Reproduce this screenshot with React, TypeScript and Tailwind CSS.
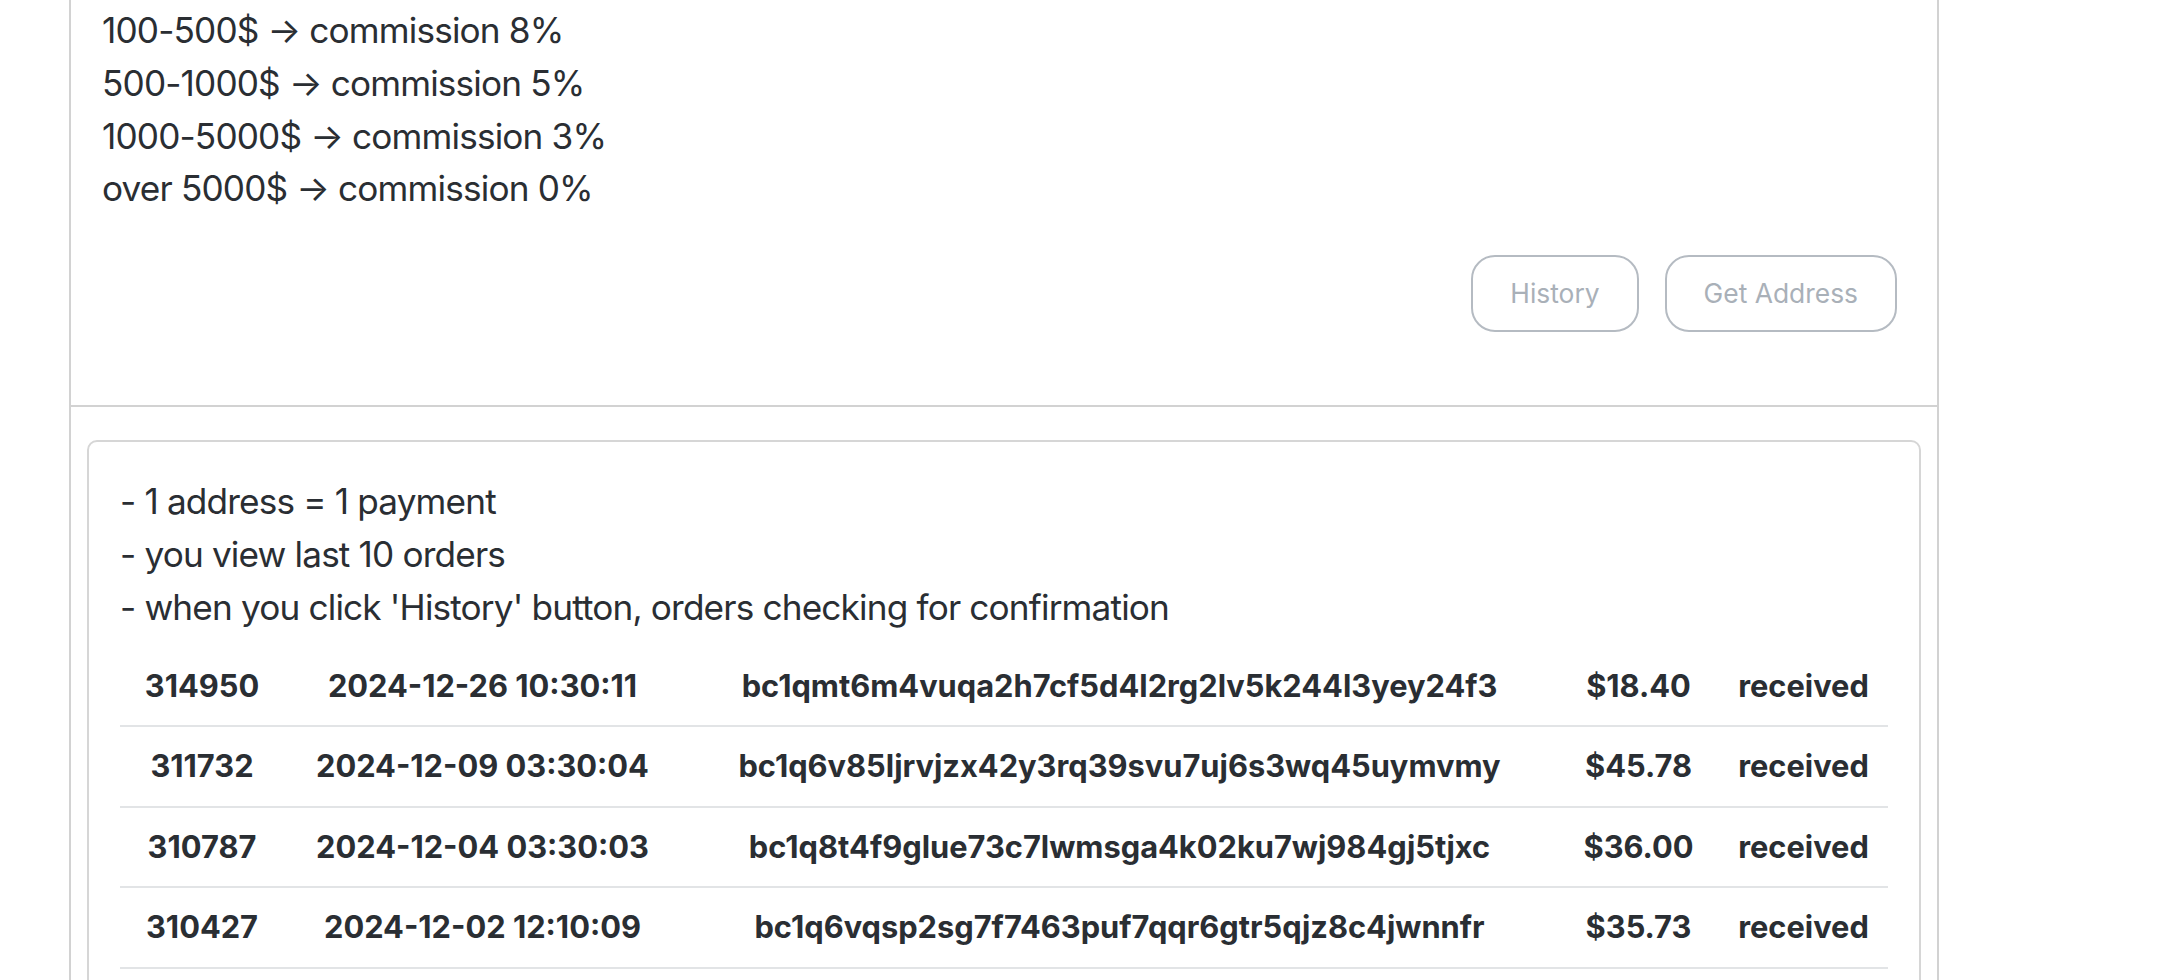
import React from "react";

const tiers = [
  "100-500$ → commission 8%",
  "500-1000$ → commission 5%",
  "1000-5000$ → commission 3%",
  "over 5000$ → commission 0%",
];

const notes = [
  "- 1 address = 1 payment",
  "- you view last 10 orders",
  "- when you click 'History' button, orders checking for confirmation",
];

const orders = [
  { id: "314950", date: "2024-12-26 10:30:11", address: "bc1qmt6m4vuqa2h7cf5d4l2rg2lv5k244l3yey24f3", amount: "$18.40", status: "received" },
  { id: "311732", date: "2024-12-09 03:30:04", address: "bc1q6v85ljrvjzx42y3rq39svu7uj6s3wq45uymvmy", amount: "$45.78", status: "received" },
  { id: "310787", date: "2024-12-04 03:30:03", address: "bc1q8t4f9glue73c7lwmsga4k02ku7wj984gj5tjxc", amount: "$36.00", status: "received" },
  { id: "310427", date: "2024-12-02 12:10:09", address: "bc1q6vqsp2sg7f7463puf7qqr6gtr5qjz8c4jwnnfr", amount: "$35.73", status: "received" },
];

export default function App() {
  return (
    <div className="h-[980px] overflow-hidden bg-white font-['Inter','Liberation_Sans',sans-serif] text-[#2a2e33]">
      <div className="ml-[69px] w-[1870px] h-[980px] overflow-hidden border-x-2 border-[#d2d2d2]">
        {/* commission block */}
        <div className="pl-[31px] pr-[40px] pt-[4px] pb-[73px]">
          {tiers.map((t, i) => (
            <p key={i} className="text-[35.2px] leading-[52.8px] tracking-[-0.024em]">
              {t}
            </p>
          ))}
          <div className="mt-[40px] flex justify-end gap-[26px]">
            <button className="h-[77px] px-[37px] rounded-[24px] border-2 border-[#b5bbc2] text-[26.4px] text-[#a9b0b8]">
              History
            </button>
            <button className="h-[77px] px-[37px] rounded-[24px] border-2 border-[#b5bbc2] text-[26.4px] text-[#a9b0b8]">
              Get Address
            </button>
          </div>
        </div>

        {/* orders */}
        <div className="border-t-2 border-[#d2d2d2] px-[16px] pt-[33px]">
          <div className="rounded-[10px] border-2 border-[#d6d6d6] px-[31px] pt-[33px] pb-[20px]">
            {notes.map((n, i) => (
              <p key={i} className="text-[35.2px] leading-[52.8px] tracking-[-0.024em]">
                {n}
              </p>
            ))}
            <table className="mt-[13px] w-full table-fixed border-collapse">
              <colgroup>
                <col className="w-[164px]" />
                <col className="w-[397px]" />
                <col className="w-[877px]" />
                <col className="w-[161px]" />
                <col className="w-[169px]" />
              </colgroup>
              <tbody>
                {orders.map((o) => (
                  <tr key={o.id} className="border-b-2 border-[#e2e4e6]">
                    <td className="py-[16px] text-center text-[30.8px] leading-[46.5px] font-bold">{o.id}</td>
                    <td className="py-[16px] text-center text-[30.8px] leading-[46.5px] font-bold">{o.date}</td>
                    <td className="py-[16px] text-center text-[30.8px] leading-[46.5px] font-bold">{o.address}</td>
                    <td className="py-[16px] text-center text-[30.8px] leading-[46.5px] font-bold">{o.amount}</td>
                    <td className="py-[16px] text-center text-[30.8px] leading-[46.5px] font-bold">{o.status}</td>
                  </tr>
                ))}
              </tbody>
            </table>
          </div>
        </div>
      </div>
    </div>
  );
}
